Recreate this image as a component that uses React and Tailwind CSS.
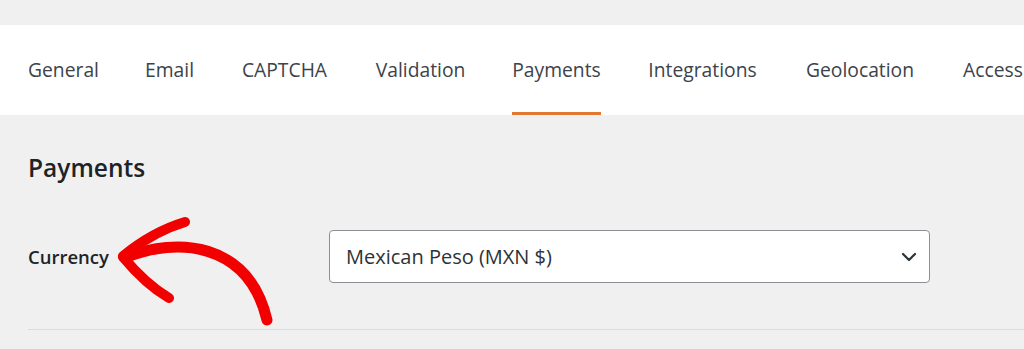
const tabs = [
  { label: "General", w: "w-[71px]" },
  { label: "Email", w: "w-[49px]" },
  { label: "CAPTCHA", w: "w-[89px]" },
  { label: "Validation", w: "w-[91px]" },
  { label: "Payments", w: "w-[89px]" },
  { label: "Integrations", w: "w-[111px]" },
  { label: "Geolocation", w: "w-[112px]" },
  { label: "Access", w: "w-[62px]" },
];

function Tabs({ active }) {
  return (
    <nav className="mt-[25px] flex h-[90px] gap-[46px] overflow-hidden whitespace-nowrap bg-white pl-[28px]">
      {tabs.map((t) => (
        <a
          key={t.label}
          href="#"
          className={
            "flex shrink-0 items-center justify-center border-y-[3px] border-t-transparent text-[19.3px] text-[#3c434a] " +
            t.w +
            " " +
            (t.label === active ? "border-b-[#e27730]" : "border-b-transparent")
          }
        >
          {t.label}
        </a>
      ))}
    </nav>
  );
}

function RedArrow() {
  return (
    <svg className="pointer-events-none absolute left-0 top-0" width="1024" height="349" viewBox="0 0 1024 349" fill="none">
      <path
        d="M127 257 C 175 238, 248 240, 267 320"
        stroke="#f20000"
        strokeWidth="11"
        strokeLinecap="round"
      />
      <path d="M123 256 C 145 238, 165 228, 185 222" stroke="#f20000" strokeWidth="10" strokeLinecap="round" />
      <path d="M123 257 C 138 275, 152 288, 169 298" stroke="#f20000" strokeWidth="10" strokeLinecap="round" />
    </svg>
  );
}

export default function App() {
  return (
    <div className="relative h-[349px] w-[1024px] overflow-hidden bg-[#f0f0f1] font-['Open_Sans',sans-serif]">
      <Tabs active="Payments" />
      <section className="pl-[28px]">
        <h2 className="mt-[37px] text-[24.5px] leading-[32px] font-semibold text-[#1d2327]">Payments</h2>
        <div className="mt-[46px] flex items-center">
          <label className="w-[301px] text-[18.5px] font-semibold text-[#1d2327]">Currency</label>
          <button className="flex h-[53px] w-[601px] items-center justify-between rounded-[4px] border border-[#8c8f94] bg-white pl-[16px] pr-[12px] text-[20px] text-[#2c3338]">
            <span>Mexican Peso (MXN $)</span>
            <svg width="16" height="10" viewBox="0 0 16 10" fill="none">
              <polyline points="2,2 8,8 14,2" stroke="#2c3338" strokeWidth="2.2" strokeLinecap="round" strokeLinejoin="round" />
            </svg>
          </button>
        </div>
        <div className="mt-[46px] border-t border-[#dcdcde]" />
      </section>
      <RedArrow />
    </div>
  );
}
